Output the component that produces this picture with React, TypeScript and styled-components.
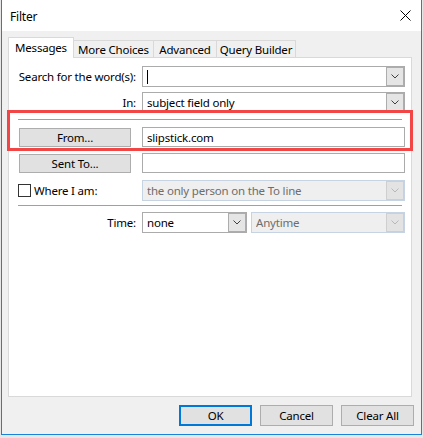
import React from "react";
import styled, { createGlobalStyle } from "styled-components";

const Global = createGlobalStyle`
  html, body { margin: 0; padding: 0; background: #e6e6e6; }
  * { box-sizing: border-box; }
`;

const FONT = `"Noto Sans", "Segoe UI", "Liberation Sans", sans-serif`;

const Page = styled.div`
  width: 423px;
  height: 438px;
  overflow: hidden;
  background: #e6e6e6;
  font-family: ${FONT};
  font-size: 11.5px;
  letter-spacing: -0.2px;
  color: #000;
`;

const Window = styled.div`
  margin-left: 1px;
  width: 421px;
  height: 435px;
  border: 1px solid #1883d7;
  border-top: none;
  background: #f0f0f0;
  display: flex;
  flex-direction: column;
`;

const TitleBar = styled.div`
  height: 31px;
  flex: none;
  background: #fff;
  display: flex;
  align-items: center;
  justify-content: space-between;
  padding: 0 10px 0 8px;
`;

const Title = styled.span`
  font-size: 12px;
  margin-top: 1px;
`;

const Content = styled.div`
  flex: 1;
  display: flex;
  flex-direction: column;
  padding: 7px 8px 0 6px;
`;

const TabStrip = styled.div`
  display: flex;
  align-items: flex-end;
  height: 20px;
  margin-bottom: -1px;
  position: relative;
  z-index: 1;
`;

const Tab = styled.div<{ $w: number; $active?: boolean }>`
  width: ${(p) => p.$w}px;
  height: ${(p) => (p.$active ? 21 : 18)}px;
  margin-left: ${(p) => (p.$active ? 0 : -1)}px;
  border: 1px solid #d9d9d9;
  border-bottom: ${(p) => (p.$active ? "none" : "1px solid #d9d9d9")};
  background: ${(p) => (p.$active ? "#fff" : "#f0f0f0")};
  display: flex;
  align-items: center;
  justify-content: center;
  padding-bottom: ${(p) => (p.$active ? 2 : 0)}px;
  white-space: nowrap;
  flex: none;
  &:first-child { margin-left: 0; }
`;

const Panel = styled.div`
  position: relative;
  height: 340px;
  margin-right: 1px;
  background: #fff;
  border: 1px solid #d9d9d9;
  padding: 8px 7px 0 10px;
  display: flex;
  flex-direction: column;
`;

const Row = styled.div<{ $mt?: number; $h?: number }>`
  display: grid;
  grid-template-columns: 117px 263px;
  column-gap: 6px;
  align-items: center;
  height: ${(p) => p.$h ?? 21}px;
  margin-top: ${(p) => p.$mt ?? 0}px;
`;

const Label = styled.span`
  justify-self: end;
  white-space: nowrap;
`;

const Separator = styled.div<{ $mt: number }>`
  height: 1px;
  background: #a0a0a0;
  margin: ${(p) => p.$mt}px 2px 0 -1px;
`;

const Field = styled.div<{ $h?: number; $disabled?: boolean; $w?: number }>`
  height: ${(p) => p.$h ?? 21}px;
  width: ${(p) => (p.$w ? `${p.$w}px` : "auto")};
  border: 1px solid ${(p) => (p.$disabled ? "#c5d3e3" : "#ababab")};
  background: ${(p) => (p.$disabled ? "#efefef" : "#fff")};
  color: ${(p) => (p.$disabled ? "#6d6d6d" : "#000")};
  display: flex;
  align-items: center;
  padding-left: 4px;
  white-space: nowrap;
  overflow: hidden;
`;

const FieldText = styled.span`
  flex: 1;
  overflow: hidden;
`;

const Caret = styled.span`
  width: 1px;
  height: 14px;
  background: #000;
`;

const DropBtn = styled.div<{ $disabled?: boolean }>`
  width: 18px;
  align-self: stretch;
  border: 1px solid ${(p) => (p.$disabled ? "#cfcfcf" : "#adadad")};
  background: ${(p) => (p.$disabled ? "#e3e3e3" : "#e5e5e5")};
  display: flex;
  align-items: center;
  justify-content: center;
  flex: none;
`;

const PushButton = styled.div<{ $w: number; $h?: number; $default?: boolean }>`
  width: ${(p) => p.$w}px;
  height: ${(p) => p.$h ?? 19}px;
  border: ${(p) => (p.$default ? "2px solid #0078d7" : "1px solid #adadad")};
  background: #e1e1e1;
  display: flex;
  align-items: center;
  justify-content: center;
  white-space: nowrap;
`;

const CheckRow = styled.div`
  display: flex;
  align-items: center;
  gap: 3px;
  margin-left: -1px;
`;

const CheckBox = styled.div`
  width: 13px;
  height: 13px;
  border: 1px solid #333;
  background: #fff;
`;

const TimeFields = styled.div`
  display: flex;
  gap: 4px;
`;

const Footer = styled.div`
  display: flex;
  justify-content: flex-end;
  gap: 8px;
  margin-top: 8px;
  margin-right: -1px;
`;

const Annotation = styled.div`
  position: absolute;
  left: -2px;
  top: 52px;
  width: 406px;
  height: 41px;
  border: 3px solid #f24545;
  pointer-events: none;
`;

const Chevron = ({ disabled }: { disabled?: boolean }) => (
  <svg width="8" height="5" viewBox="0 0 8 5">
    <path d="M0.5 0.5 L4 4 L7.5 0.5" fill="none" stroke={disabled ? "#b8b8b8" : "#404040"} strokeWidth="1" />
  </svg>
);

const CloseIcon = () => (
  <svg width="11" height="11" viewBox="0 0 11 11">
    <path d="M0.5 0.5 L10.5 10.5 M10.5 0.5 L0.5 10.5" stroke="#000" strokeWidth="1" />
  </svg>
);

const Combo = ({
  text,
  disabled,
  h,
  w,
  caret,
}: {
  text?: string;
  disabled?: boolean;
  h?: number;
  w?: number;
  caret?: boolean;
}) => (
  <Field $disabled={disabled} $h={h} $w={w}>
    {caret ? <Caret /> : null}
    <FieldText>{text}</FieldText>
    <DropBtn $disabled={disabled}>
      <Chevron disabled={disabled} />
    </DropBtn>
  </Field>
);

export default function App() {
  return (
    <Page>
      <Global />
      <Window>
        <TitleBar>
          <Title>Filter</Title>
          <CloseIcon />
        </TitleBar>
        <Content>
          <TabStrip>
            <Tab $w={66} $active>Messages</Tab>
            <Tab $w={81}>More Choices</Tab>
            <Tab $w={64}>Advanced</Tab>
            <Tab $w={80}>Query Builder</Tab>
          </TabStrip>
          <Panel>
            <Row>
              <Label>Search for the word(s):</Label>
              <Combo caret />
            </Row>
            <Row $mt={5}>
              <Label>In:</Label>
              <Combo text="subject field only" />
            </Row>
            <Separator $mt={6} />
            <Row $mt={7} $h={20}>
              <PushButton $w={112}>From...</PushButton>
              <Field $h={20}>slipstick.com</Field>
            </Row>
            <Row $mt={6} $h={20}>
              <PushButton $w={112}>Sent To...</PushButton>
              <Field $h={20} />
            </Row>
            <Row $mt={7}>
              <CheckRow>
                <CheckBox />
                <span>Where I am:</span>
              </CheckRow>
              <Combo text="the only person on the To line" disabled />
            </Row>
            <Separator $mt={4} />
            <Row $mt={6}>
              <Label>Time:</Label>
              <TimeFields>
                <Combo text="none" w={105} />
                <Combo text="Anytime" w={154} disabled />
              </TimeFields>
            </Row>
            <Annotation />
          </Panel>
          <Footer>
            <PushButton $w={73} $h={21} $default>OK</PushButton>
            <PushButton $w={73} $h={21}>Cancel</PushButton>
            <PushButton $w={73} $h={21}>Clear All</PushButton>
          </Footer>
        </Content>
      </Window>
    </Page>
  );
}
